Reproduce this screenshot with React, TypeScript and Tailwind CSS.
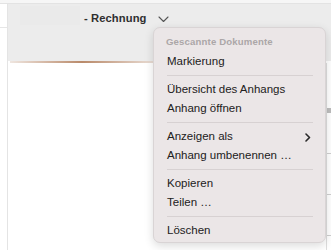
import React from "react";

const Sep = () => (
  <div className="h-[9px] flex items-center pl-[13px] pr-[12px]">
    <div className="h-px w-full bg-[#d7d1d2]" />
  </div>
);

const Item = ({ label, sub }: { label: string; sub?: boolean }) => (
  <div className="h-[19px] flex items-center justify-between pl-[13px] pr-[14px] text-[11.5px] text-[#222121]">
    <span>{label}</span>
    {sub && (
      <svg width="6" height="9" viewBox="0 0 6 9" className="mt-px">
        <path d="M1 1 L4.5 4.5 L1 8" fill="none" stroke="#2a2a2a" strokeWidth="1.6" strokeLinecap="round" strokeLinejoin="round" />
      </svg>
    )}
  </div>
);

export default function App() {
  return (
    <div
      className="w-[331px] h-[250px] relative overflow-hidden bg-white"
      style={{ fontFamily: '"Liberation Sans", Arial, sans-serif' }}
    >
      <div className="h-[4px] bg-[#f6f6f6] border-b border-[#e3e3e3]" />
      <div className="flex h-[246px]">
        <div className="w-[7px] bg-white flex flex-col">
          <div className="h-[23px]" />
          <div className="h-px bg-[#e6e6e6]" />
        </div>
        <div className="flex-1 flex flex-col border-l border-[#e4e4e4]">
          <div className="h-[57px] bg-[#ececec] relative">
            <div className="absolute left-[12px] top-[2px] w-[60px] h-[19px] bg-[#eaeaea]" />
            <div className="relative flex items-center pl-[76px] pt-[5px] h-[24px]">
              <span className="text-[11.2px] font-bold text-[#2f2f2f] tracking-[0.1px]">- Rechnung</span>
              <svg width="11" height="7" viewBox="0 0 11 7" className="ml-[11px] mt-[1px]">
                <path d="M1 1 L5.5 5.5 L10 1" fill="none" stroke="#555" strokeWidth="1.1" strokeLinecap="round" strokeLinejoin="round" />
              </svg>
            </div>
          </div>
          <div className="h-[2px] ml-[2px] w-[144px] bg-gradient-to-r from-[#efe6e0] via-[#b98a6a] to-[#e9ddd5]" />
          <div className="flex-1 bg-white flex justify-end">
            <div className="w-[5px] h-full border-l border-[#dedede] flex flex-col gap-[40px] pt-[45px]">
              <div className="h-[5px] bg-[#bdbdbd]" />
              <div className="h-px bg-[#cfcfcf]" />
              <div className="h-px bg-[#cfcfcf]" />
              <div className="h-px bg-[#cfcfcf]" />
            </div>
          </div>
        </div>
      </div>

      <div className="absolute left-[153px] top-[27px] w-[173px] h-[216px] rounded-[7px] bg-[#ebe6e7] border border-[#d9d4d5] shadow-[0_3px_10px_rgba(0,0,0,0.14)] pt-[5px]">
        <div className="h-[19px] flex items-center pl-[12px] text-[9.6px] font-bold text-[#aca7a8] tracking-[0.15px]">
          Gescannte Dokumente
        </div>
        <Item label="Markierung" />
        <Sep />
        <Item label="Übersicht des Anhangs" />
        <Item label="Anhang öffnen" />
        <Sep />
        <Item label="Anzeigen als" sub />
        <Item label="Anhang umbenennen …" />
        <Sep />
        <Item label="Kopieren" />
        <Item label="Teilen …" />
        <Sep />
        <Item label="Löschen" />
      </div>
    </div>
  );
}
